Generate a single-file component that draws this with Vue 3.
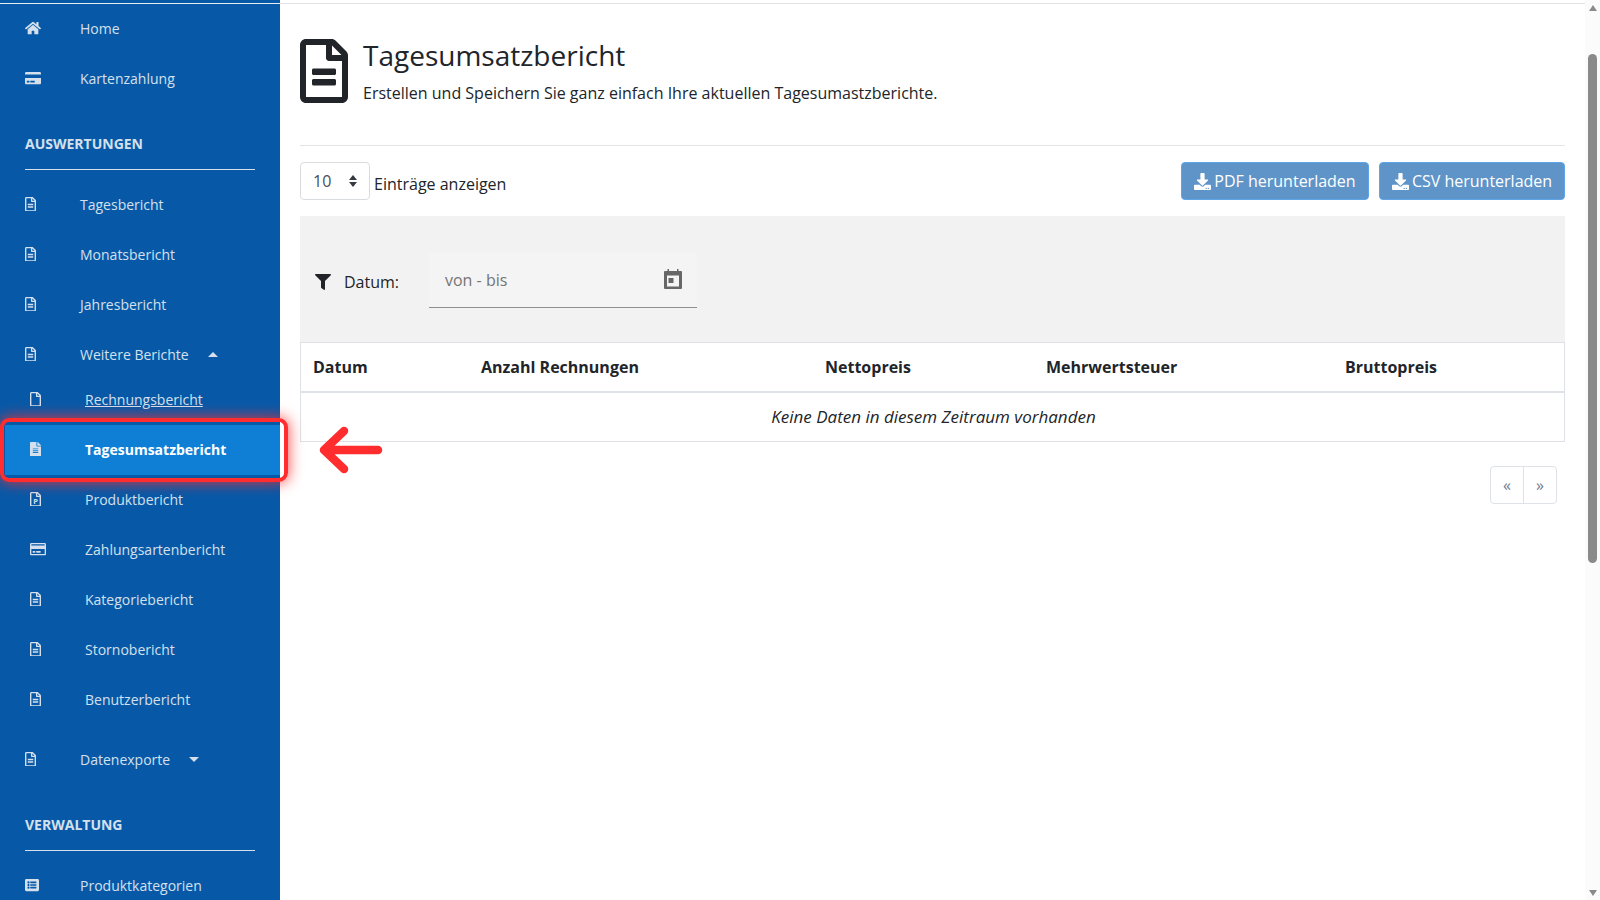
<template>
  <div class="shell">
    <aside class="sidebar">
      <div class="top-rule"></div>
      <template v-for="block in menu" :key="block.id">
        <div v-if="block.heading" class="section">
          <div class="section-title">{{ block.heading }}</div>
          <div class="section-rule"></div>
        </div>
        <a
          v-for="item in block.items"
          :key="item.label"
          class="nav-item"
          :class="{ sub: item.sub, active: item.active, spaced: item.spaced, first: item.first }"
        >
          <span class="nav-icon">
            <svg :viewBox="icons[item.icon].box" :style="{ width: (item.w || 11) + 'px' }" fill="currentColor">
              <path :d="icons[item.icon].d" />
              <text v-if="item.icon === 'file'" x="192" y="410" text-anchor="middle" font-size="260" font-weight="700" font-family="Open Sans, sans-serif">P</text>
            </svg>
          </span>
          <span class="nav-label" :class="{ current: item.current }">{{ item.label }}</span>
          <span v-if="item.caret" class="caret" :class="item.caret"></span>
        </a>
      </template>
    </aside>

    <main class="content">
      <div class="top-line"></div>
      <header class="page-head">
        <svg class="head-icon" viewBox="0 0 384 512" fill="currentColor"><path :d="icons.fileAlt.d" /></svg>
        <div>
          <h1>Tagesumsatzbericht</h1>
          <p>Erstellen und Speichern Sie ganz einfach Ihre aktuellen Tagesumastzberichte.</p>
        </div>
      </header>

      <div class="toolbar">
        <div class="length">
          <div class="select">
            <span>10</span>
            <span class="sort-arrows"><i class="up"></i><i class="down"></i></span>
          </div>
          <span class="length-label">Einträge anzeigen</span>
        </div>
        <div class="actions">
          <button class="btn pdf">
            <svg viewBox="0 0 512 512" fill="currentColor"><path :d="icons.download.d" /></svg>
            PDF herunterladen
          </button>
          <button class="btn csv">
            <svg viewBox="0 0 512 512" fill="currentColor"><path :d="icons.download.d" /></svg>
            CSV herunterladen
          </button>
        </div>
      </div>

      <div class="filter-panel">
        <svg class="filter-icon" viewBox="0 0 512 512" fill="currentColor"><path :d="icons.filter.d" /></svg>
        <span class="filter-label">Datum:</span>
        <div class="date-input">
          <span>von - bis</span>
          <svg viewBox="0 0 18 20" fill="currentColor"><path :d="icons.calendar.d" fill-rule="evenodd" /></svg>
        </div>
      </div>

      <table class="report">
        <colgroup>
          <col v-for="c in columns" :key="c.label" :style="{ width: c.width + 'px' }" />
        </colgroup>
        <thead>
          <tr><th v-for="c in columns" :key="c.label">{{ c.label }}</th></tr>
        </thead>
        <tbody>
          <tr><td colspan="5">Keine Daten in diesem Zeitraum vorhanden</td></tr>
        </tbody>
      </table>

      <div class="pager">
        <span>«</span>
        <span>»</span>
      </div>
    </main>

    <div class="scrollbar">
      <i class="sb-up"></i>
      <div class="sb-thumb"></div>
      <i class="sb-down"></i>
    </div>

    <div class="highlight"></div>
    <svg class="pointer" viewBox="0 0 70 50" fill="none">
      <path d="M63 25H9M29 6L9 25L29 44" stroke="#ff2d2d" stroke-width="8.5" stroke-linecap="round" stroke-linejoin="round" />
    </svg>
  </div>
</template>

<script setup>
const fileRegular = 'M369.9 97.9L286 14C277 5 264.8-.1 252.1-.1H48C21.5 0 0 21.5 0 48v416c0 26.5 21.5 48 48 48h288c26.5 0 48-21.5 48-48V131.9c0-12.7-5.1-25-14.1-34zM332.1 128H256V51.9l76.1 76.1zM48 464V48h160v104c0 13.3 10.7 24 24 24h104v288H48z'

const icons = {
  home: { box: '0 0 576 512', d: 'M280.37 148.26L96 300.11V464a16 16 0 0 0 16 16l112.06-.29a16 16 0 0 0 15.92-16V368a16 16 0 0 1 16-16h64a16 16 0 0 1 16 16v95.64a16 16 0 0 0 16 16.05L464 480a16 16 0 0 0 16-16V300L295.67 148.26a12.19 12.19 0 0 0-15.3 0zM571.6 251.47L488 182.56V44.05a12 12 0 0 0-12-12h-56a12 12 0 0 0-12 12v72.61L318.47 43a48 48 0 0 0-61 0L4.34 251.47a12 12 0 0 0-1.6 16.9l25.5 31A12 12 0 0 0 45.15 301l235.22-193.74a12.19 12.19 0 0 1 15.3 0L530.9 301a12 12 0 0 0 16.9-1.6l25.5-31a12 12 0 0 0-1.7-16.93z' },
  card: { box: '0 0 576 512', d: 'M0 432c0 26.5 21.5 48 48 48h480c26.5 0 48-21.5 48-48V256H0v176zm192-68c0-6.6 5.4-12 12-12h136c6.6 0 12 5.4 12 12v40c0 6.6-5.4 12-12 12H204c-6.6 0-12-5.4-12-12v-40zm-128 0c0-6.6 5.4-12 12-12h72c6.6 0 12 5.4 12 12v40c0 6.6-5.4 12-12 12H76c-6.6 0-12-5.4-12-12v-40zM576 80v48H0V80c0-26.5 21.5-48 48-48h480c26.5 0 48 21.5 48 48z' },
  cardOutline: { box: '0 0 576 512', d: 'M527.9 32H48.1C21.5 32 0 53.5 0 80v352c0 26.5 21.5 48 48.1 48h479.8c26.6 0 48.1-21.5 48.1-48V80c0-26.5-21.5-48-48.1-48zM54.1 80h467.8c3.3 0 6 2.7 6 6v42H48.1V86c0-3.3 2.7-6 6-6zm467.8 352H54.1c-3.3 0-6-2.7-6-6V256h479.8v170c0 3.3-2.7 6-6 6zM192 332v40c0 6.6-5.4 12-12 12h-72c-6.6 0-12-5.4-12-12v-40c0-6.6 5.4-12 12-12h72c6.6 0 12 5.4 12 12zm192 0v40c0 6.6-5.4 12-12 12H236c-6.6 0-12-5.4-12-12v-40c0-6.6 5.4-12 12-12h136c6.6 0 12 5.4 12 12z' },
  fileAlt: { box: '0 0 384 512', d: 'M288 248v28c0 6.6-5.4 12-12 12H108c-6.6 0-12-5.4-12-12v-28c0-6.6 5.4-12 12-12h168c6.6 0 12 5.4 12 12zm-12 72H108c-6.6 0-12 5.4-12 12v28c0 6.6 5.4 12 12 12h168c6.6 0 12-5.4 12-12v-28c0-6.6-5.4-12-12-12zm108-188.1V464c0 26.5-21.5 48-48 48H48c-26.5 0-48-21.5-48-48V48C0 21.5 21.5 0 48 0h204.1C264.8 0 277 5.1 286 14.1L369.9 98c9 8.9 14.1 21.2 14.1 33.9zm-128-80V128h76.1L256 51.9zM336 464V176H232c-13.3 0-24-10.7-24-24V48H48v416h288z' },
  fileSolid: { box: '0 0 384 512', d: 'M224 136V0H24C10.7 0 0 10.7 0 24v464c0 13.3 10.7 24 24 24h336c13.3 0 24-10.7 24-24V160H248c-13.2 0-24-10.8-24-24zm64 236c0 6.6-5.4 12-12 12H108c-6.6 0-12-5.4-12-12v-8c0-6.6 5.4-12 12-12h168c6.6 0 12 5.4 12 12v8zm0-64c0 6.6-5.4 12-12 12H108c-6.6 0-12-5.4-12-12v-8c0-6.6 5.4-12 12-12h168c6.6 0 12 5.4 12 12v8zm0-72v8c0 6.6-5.4 12-12 12H108c-6.6 0-12-5.4-12-12v-8c0-6.6 5.4-12 12-12h168c6.6 0 12 5.4 12 12zm96-114.1v6.1H256V0h6.1c6.4 0 12.5 2.5 17 7l97.9 98c4.5 4.5 7 10.6 7 16.9z' },
  fileBlank: { box: '0 0 384 512', d: fileRegular },
  file: { box: '0 0 384 512', d: fileRegular },
  list: { box: '0 0 512 512', d: 'M464 480H48c-26.51 0-48-21.49-48-48V80c0-26.51 21.49-48 48-48h416c26.51 0 48 21.49 48 48v352c0 26.51-21.49 48-48 48zM128 120c-22.091 0-40 17.909-40 40s17.909 40 40 40 40-17.909 40-40-17.909-40-40-40zm0 96c-22.091 0-40 17.909-40 40s17.909 40 40 40 40-17.909 40-40-17.909-40-40-40zm0 96c-22.091 0-40 17.909-40 40s17.909 40 40 40 40-17.909 40-40-17.909-40-40-40zm288-136v-32c0-6.627-5.373-12-12-12H204c-6.627 0-12 5.373-12 12v32c0 6.627 5.373 12 12 12h200c6.627 0 12-5.373 12-12zm0 96v-32c0-6.627-5.373-12-12-12H204c-6.627 0-12 5.373-12 12v32c0 6.627 5.373 12 12 12h200c6.627 0 12-5.373 12-12zm0 96v-32c0-6.627-5.373-12-12-12H204c-6.627 0-12 5.373-12 12v32c0 6.627 5.373 12 12 12h200c6.627 0 12-5.373 12-12z' },
  download: { d: 'M216 0h80c13.3 0 24 10.7 24 24v168h87.7c17.8 0 26.7 21.5 14.1 34.1L269.7 378.3c-7.5 7.5-19.8 7.5-27.3 0L90.1 226.1c-12.6-12.6-3.7-34.1 14.1-34.1H192V24c0-13.3 10.7-24 24-24zm296 376v112c0 13.3-10.7 24-24 24H24c-13.3 0-24-10.7-24-24V376c0-13.3 10.7-24 24-24h146.7l49 49c20.1 20.1 52.5 20.1 72.6 0l49-49H488c13.3 0 24 10.7 24 24zm-124 88c0-11-9-20-20-20s-20 9-20 20 9 20 20 20 20-9 20-20zm64 0c0-11-9-20-20-20s-20 9-20 20 9 20 20 20 20-9 20-20z' },
  filter: { d: 'M487.976 0H24.028C2.71 0-8.047 25.866 7.058 40.971L192 225.941V432c0 7.831 3.821 15.17 10.237 19.662l80 55.98C298.02 518.69 320 507.493 320 487.98V225.941l184.947-184.97C520.021 25.896 509.338 0 487.976 0z' },
  calendar: { d: 'M1 2H3.5V0H5V2H13V0H14.5V2H17A1 1 0 0 1 18 3V19A1 1 0 0 1 17 20H1A1 1 0 0 1 0 19V3A1 1 0 0 1 1 2ZM3 6.5V17.5H15V6.5ZM4.5 9H9.5V14H4.5Z' }
}

const menu = [
  {
    id: 'start',
    items: [
      { label: 'Home', icon: 'home', w: 16 },
      { label: 'Kartenzahlung', icon: 'card', w: 16 }
    ]
  },
  {
    id: 'reports',
    heading: 'AUSWERTUNGEN',
    items: [
      { label: 'Tagesbericht', icon: 'fileAlt' },
      { label: 'Monatsbericht', icon: 'fileAlt' },
      { label: 'Jahresbericht', icon: 'fileAlt' },
      { label: 'Weitere Berichte', icon: 'fileAlt', caret: 'open' },
      { label: 'Rechnungsbericht', icon: 'fileBlank', sub: true, current: true, first: true },
      { label: 'Tagesumsatzbericht', icon: 'fileSolid', sub: true, active: true },
      { label: 'Produktbericht', icon: 'file', sub: true },
      { label: 'Zahlungsartenbericht', icon: 'cardOutline', sub: true, w: 16 },
      { label: 'Kategoriebericht', icon: 'fileAlt', sub: true },
      { label: 'Stornobericht', icon: 'fileAlt', sub: true },
      { label: 'Benutzerbericht', icon: 'fileAlt', sub: true },
      { label: 'Datenexporte', icon: 'fileAlt', caret: 'closed', spaced: true }
    ]
  },
  {
    id: 'admin',
    heading: 'VERWALTUNG',
    items: [{ label: 'Produktkategorien', icon: 'list', w: 14 }]
  }
]

const columns = [
  { label: 'Datum', width: 168 },
  { label: 'Anzahl Rechnungen', width: 344 },
  { label: 'Nettopreis', width: 221 },
  { label: 'Mehrwertsteuer', width: 299 },
  { label: 'Bruttopreis', width: 233 }
]
</script>

<style>
html, body {
  margin: 0;
  background: #fff;
  overflow: hidden;
}
</style>

<style scoped>
.shell {
  position: relative;
  display: flex;
  height: 900px;
  overflow: hidden;
  font-family: "Open Sans", sans-serif;
  color: #212529;
}

/* sidebar */
.sidebar {
  flex: 0 0 280px;
  height: 900px;
  overflow: hidden;
  background: #0759a8;
  color: #d5e0ec;
  font-size: 14px;
}

.top-rule {
  height: 1px;
  margin-top: 3px;
  background: #e6edf5;
}

.nav-item {
  box-sizing: border-box;
  display: flex;
  align-items: center;
  height: 50px;
  padding: 0 0 2px 25px;
}

.nav-item.sub {
  padding-left: 30px;
}

.nav-item.first {
  margin-top: -5px;
}

.nav-item.spaced {
  margin-top: 10px;
}

.nav-icon {
  flex: 0 0 55px;
  display: flex;
  align-items: center;
}

.nav-icon svg {
  display: block;
}

.nav-item.active {
  margin-left: 5px;
  padding-left: 25px;
  background: #0f7fd6;
  color: #fff;
  font-weight: 700;
}

.nav-item.active .nav-icon {
  color: #d5e0ec;
}

.current {
  text-decoration: underline;
}

.caret {
  width: 0;
  height: 0;
  margin-left: 19px;
  border-left: 5px solid transparent;
  border-right: 5px solid transparent;
}

.caret.open {
  border-bottom: 5px solid #d5e0ec;
}

.caret.closed {
  border-top: 5px solid #d5e0ec;
}

.section {
  margin: 28px 25px 10px;
}

.section-title {
  height: 24px;
  line-height: 24px;
  font-weight: 700;
  font-size: 14px;
}

.section-rule {
  height: 1px;
  margin-top: 13px;
  background: #d5e0ec;
}

/* main column */
.content {
  flex: 1;
  min-width: 0;
  padding: 0 20px;
}

.top-line {
  height: 1px;
  margin: 3px -20px 0;
  background: #e3e3e3;
}

.page-head {
  display: flex;
  gap: 15px;
  height: 142px;
  padding-top: 35px;
  box-sizing: border-box;
  border-bottom: 1px solid #e2e4e6;
  margin-bottom: 16px;
}

.head-icon {
  width: 48px;
  height: 64px;
  flex: none;
}

h1 {
  margin: -1px 0 0;
  font-size: 28px;
  font-weight: 400;
  line-height: 34px;
}

.page-head p {
  margin: 9px 0 0;
  font-size: 16px;
  line-height: 24px;
}

.toolbar {
  display: flex;
  justify-content: space-between;
  height: 38px;
  margin-bottom: 16px;
}

.length {
  display: flex;
  align-items: flex-end;
  gap: 4px;
}

.select {
  box-sizing: border-box;
  display: flex;
  align-items: center;
  justify-content: space-between;
  width: 70px;
  height: 38px;
  padding: 0 12px;
  border: 1px solid #d9dcdf;
  border-radius: 4px;
  color: #495057;
  font-size: 16px;
}

.sort-arrows {
  display: flex;
  flex-direction: column;
  gap: 2px;
}

.sort-arrows i {
  width: 0;
  height: 0;
  border-left: 4px solid transparent;
  border-right: 4px solid transparent;
}

.sort-arrows .up {
  border-bottom: 5px solid #343a40;
}

.sort-arrows .down {
  border-top: 5px solid #343a40;
}

.length-label {
  font-size: 16px;
  line-height: 30px;
  margin-bottom: 1px;
}

.actions {
  display: flex;
  gap: 10px;
}

.btn {
  display: flex;
  align-items: center;
  justify-content: center;
  gap: 3px;
  height: 38px;
  padding: 0;
  border: 1px solid #5da5e8;
  border-radius: 4px;
  background: #5f94c8;
  color: #fff;
  font: 16px "Open Sans", sans-serif;
}

.btn svg {
  width: 17px;
  height: 17px;
}

.btn.pdf {
  width: 188px;
}

.btn.csv {
  width: 186px;
}

.filter-panel {
  box-sizing: border-box;
  display: flex;
  align-items: center;
  height: 126px;
  padding-left: 15px;
  background: #f2f2f2;
}

.filter-icon {
  width: 16px;
  height: 16px;
  margin-top: 5px;
}

.filter-label {
  margin-left: 13px;
  width: 85px;
  font-size: 16px;
  margin-top: 6px;
}

.date-input {
  box-sizing: border-box;
  display: flex;
  align-items: center;
  justify-content: space-between;
  width: 268px;
  height: 55px;
  margin-top: 3px;
  padding: 0 15px 0 16px;
  border-bottom: 1px solid #8e8e8e;
  background: #f4f4f4;
  color: #757575;
  font-size: 16px;
}

.date-input svg {
  width: 18px;
  height: 20px;
  margin-top: -3px;
  color: #666;
}

.report {
  width: 100%;
  table-layout: fixed;
  border-collapse: separate;
  border-spacing: 0;
  font-size: 16px;
}

.report th {
  height: 51px;
  padding: 0 0 0 13px;
  box-sizing: border-box;
  border-top: 1px solid #dee2e6;
  border-bottom: 2px solid #dee2e6;
  font-weight: 700;
  text-align: left;
}

.report th:first-child,
.report td {
  border-left: 1px solid #dee2e6;
}

.report th:first-child {
  padding-left: 12px;
}

.report th:last-child,
.report td {
  border-right: 1px solid #dee2e6;
}

.report td {
  height: 49px;
  box-sizing: border-box;
  padding: 0 0 2px 2px;
  border-bottom: 1px solid #dee2e6;
  font-size: 17px;
  font-style: italic;
  text-align: center;
}

.pager {
  display: flex;
  justify-content: flex-end;
  margin: 24px 8px 0 0;
}

.pager span {
  box-sizing: border-box;
  display: flex;
  align-items: center;
  justify-content: center;
  width: 34px;
  height: 38px;
  border: 1px solid #dee2e6;
  color: #6c7d90;
  font-size: 16px;
}

.pager span:first-child {
  border-radius: 4px 0 0 4px;
}

.pager span:last-child {
  margin-left: -1px;
  border-radius: 0 4px 4px 0;
}

/* window scrollbar */
.scrollbar {
  flex: 0 0 15px;
  display: flex;
  flex-direction: column;
  align-items: center;
  background: #fbfbfb;
}

.sb-up,
.sb-down {
  width: 0;
  height: 0;
  border-left: 4.5px solid transparent;
  border-right: 4.5px solid transparent;
}

.sb-up {
  margin-top: 5px;
  border-bottom: 6px solid #8a8a8a;
}

.sb-thumb {
  width: 9px;
  height: 509px;
  margin-top: 43px;
  border-radius: 5px;
  background: #8a8a8a;
}

.sb-down {
  margin-top: auto;
  margin-bottom: 4px;
  border-top: 6px solid #8a8a8a;
}

/* tutorial markup over the page */
.highlight {
  position: absolute;
  left: 0;
  top: 418px;
  width: 280px;
  height: 56px;
  border: 4px solid #ff2d2d;
  border-radius: 9px;
  box-shadow: 0 0 14px 1px rgba(255, 45, 45, 0.8);
  pointer-events: none;
}

.pointer {
  position: absolute;
  left: 315px;
  top: 425px;
  width: 70px;
  height: 50px;
  pointer-events: none;
}
</style>
